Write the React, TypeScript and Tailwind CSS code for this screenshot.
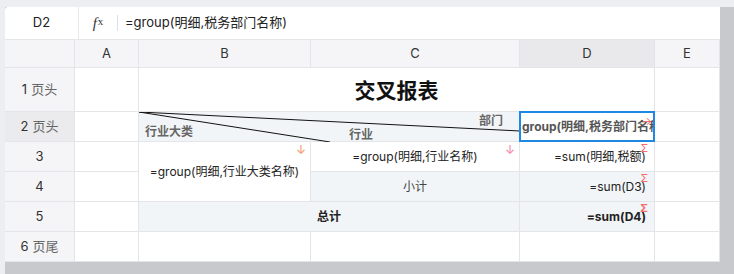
import React from "react";

const font = {
  fontFamily: '"Inter", "Noto Sans CJK SC", "Noto Sans", sans-serif',
};

// column widths: row header, A, B, C, D, E
const cols = "grid-cols-[70px_64px_172px_209px_135px_65px]";
const rows = "grid-rows-[28px_44px_30px_30px_30px_30px_30px]";

const line = "border-r border-b border-[#e3e5e8]";
const rowHead = `${line} bg-[#f5f5f7] flex items-center justify-center text-[13px] text-[#333]`;
const colHead = `${line} bg-[#f5f5f7] flex items-center justify-center text-[13px] text-[#333]`;
const tint = "bg-[#f2f5f7]";

const Sigma = () => (
  <span className="absolute right-[6px] top-[1px] text-[11px] leading-none text-[#f56c6c]">
    Σ
  </span>
);

export default function App() {
  return (
    <div className="w-[734px] h-[274px] bg-[#c8c9cc] relative overflow-hidden" style={font}>
      <div className="absolute inset-x-0 top-0 h-[7px] bg-[#eceef2]" />
      <div className="absolute left-0 top-0 w-[5px] h-full bg-[#eceef2]" />
      <div className="absolute left-[5px] top-[7px] w-[715px] bg-white rounded-tl-[3px]">
        {/* Formula bar */}
        <div className="h-[33px] flex items-center border-b border-[#e3e5e8]">
          <div className="w-[74px] h-full flex items-center justify-center border-r border-[#e8e9ec] text-[13px] text-[#222]">
            D2
          </div>
          <div className="w-[38px] flex items-center justify-center">
            <span
              className="flex items-center text-[#333] leading-none"
              style={{ fontFamily: '"Liberation Serif", "DejaVu Serif", serif' }}
            >
              <span className="text-[15px] italic">f</span>
              <span className="text-[11px] ml-[1px] -mt-[3px]">x</span>
            </span>
          </div>
          <div className="w-px h-[16px] bg-[#dcdfe6]" />
          <div className="pl-[7px] text-[13px] text-[#222]">=group(明细,税务部门名称)</div>
        </div>

        {/* Sheet grid */}
        <div className={`grid ${cols} ${rows}`}>
          <div className={`${colHead}`} />
          <div className={colHead}>A</div>
          <div className={colHead}>B</div>
          <div className={colHead}>C</div>
          <div className={`${line} bg-[#e9e9eb] flex items-center justify-center text-[13px] text-[#333]`}>D</div>
          <div className={colHead}>E</div>

          {/* Row 1 */}
          <div className={rowHead}>
            1 <span className="ml-1 text-[#666]">页头</span>
          </div>
          <div className={line} />
          <div className={`${line} col-span-3 flex items-center justify-center pt-[3px] text-[21px] font-bold text-[#111]`}>
            交叉报表
          </div>
          <div className={line} />

          {/* Row 2 */}
          <div className={`${line} bg-[#ebebed] flex items-center justify-center text-[13px] text-[#333]`}>
            2 <span className="ml-1 text-[#666]">页头</span>
          </div>
          <div className={line} />
          <div className={`${line} ${tint} col-span-2 relative`}>
            <svg className="absolute left-0 top-0" width="381" height="30">
              <line x1="0" y1="0" x2="191" y2="30" stroke="#111" strokeWidth="1" />
              <line x1="0" y1="0" x2="381" y2="19" stroke="#111" strokeWidth="1" />
            </svg>
            <span className="absolute left-[6px] top-[11px] text-[12px] font-bold text-[#666]">行业大类</span>
            <span className="absolute left-[210px] top-[14px] text-[12px] font-bold text-[#666]">行业</span>
            <span className="absolute right-[16px] top-[0px] text-[12px] font-bold text-[#666]">部门</span>
          </div>
          <div className={`${line} relative`}>
            <div className="absolute left-[-1px] top-[-1px] w-[136px] h-[31px] border-2 border-[#1e88e5] flex items-center overflow-hidden whitespace-nowrap pl-[1px] text-[12px] font-bold text-[#555]">
              group(明细,税务部门名称)
            </div>
            <span className="absolute right-[2px] top-[4px] text-[11px] leading-none text-[#f56c6c]">→</span>
          </div>
          <div className={line} />

          {/* Row 3 */}
          <div className={rowHead}>3</div>
          <div className={line} />
          <div className={`${line} row-span-2 relative flex items-center justify-center text-[12px] text-[#222]`}>
            <span className="absolute right-[4px] top-[2px] text-[12px] leading-none text-[#f7925b]">↓</span>
            =group(明细,行业大类名称)
          </div>
          <div className={`${line} relative flex items-center justify-center text-[12px] text-[#222]`}>
            =group(明细,行业名称)
            <span className="absolute right-[4px] top-[2px] text-[12px] leading-none text-[#f582a0]">↓</span>
          </div>
          <div className={`${line} relative flex items-center justify-end pr-[8px] text-[12px] text-[#222]`}>
            =sum(明细,税额)
            <Sigma />
          </div>
          <div className={line} />

          {/* Row 4 */}
          <div className={rowHead}>4</div>
          <div className={line} />
          <div className={`${line} ${tint} flex items-center justify-center text-[12px] text-[#444]`}>小计</div>
          <div className={`${line} ${tint} relative flex items-center justify-end pr-[8px] text-[12px] text-[#222]`}>
            =sum(D3)
            <Sigma />
          </div>
          <div className={line} />

          {/* Row 5 */}
          <div className={rowHead}>5</div>
          <div className={line} />
          <div className={`${line} ${tint} col-span-2 flex items-center justify-center text-[12px] font-bold text-[#222]`}>
            总计
          </div>
          <div className={`${line} ${tint} relative flex items-center justify-end pr-[8px] text-[12px] font-bold text-[#222]`}>
            =sum(D4)
            <Sigma />
          </div>
          <div className={line} />

          {/* Row 6 */}
          <div className={rowHead}>
            6 <span className="ml-1 text-[#666]">页尾</span>
          </div>
          <div className={line} />
          <div className={line} />
          <div className={line} />
          <div className={line} />
          <div className={line} />
        </div>
      </div>
    </div>
  );
}
